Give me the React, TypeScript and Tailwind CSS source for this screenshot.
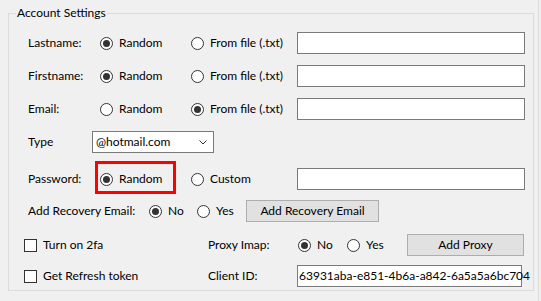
import React from 'react';

const font = { fontFamily: 'Lato, "Noto Sans", sans-serif' };

const Radio: React.FC<{ checked?: boolean; label: string; className?: string }> = ({ checked, label, className = '' }) => (
    <div className={`flex items-center ${className}`}>
        <span className="w-[13px] h-[13px] rounded-full border border-[#333] bg-white flex items-center justify-center shrink-0">
            {checked && <span className="w-[7px] h-[7px] rounded-full bg-[#333]"></span>}
        </span>
        <span className="ml-[6px] whitespace-nowrap">{label}</span>
    </div>
);

const Check: React.FC<{ label: string }> = ({ label }) => (
    <div className="flex items-center w-[199px] pl-[15px]">
        <span className="w-[13px] h-[13px] border border-[#333] bg-white shrink-0"></span>
        <span className="ml-[6px] whitespace-nowrap">{label}</span>
    </div>
);

const TextBox: React.FC<{ value?: string; className?: string }> = ({ value = '', className = 'w-[228px]' }) => (
    <div className={`h-[22px] border border-[#7a7a7a] bg-white flex items-center px-[1px] ${className}`}>
        <span className="whitespace-nowrap">{value}</span>
    </div>
);

const Button: React.FC<{ label: string; className?: string }> = ({ label, className = '' }) => (
    <button className={`h-[22px] border border-[#adadad] bg-[#e1e1e1] flex items-center justify-center ${className}`}>
        {label}
    </button>
);

const SourceRow: React.FC<{ label: string; first: boolean; second: string; mt: string; highlight?: boolean }> = ({ label, first, second, mt, highlight }) => (
    <div className={`flex items-center h-[22px] ${mt}`}>
        <span className="w-[91px] pl-[19px]">{label}</span>
        <div className="w-[91px] relative">
            <Radio checked={first} label="Random" />
            {highlight && (
                <span className="absolute -left-[5px] -top-[10px] w-[81px] h-[33px] border-[3px] border-[#ff0000]"></span>
            )}
        </div>
        <Radio checked={!first} label={second} className="w-[106px]" />
        <TextBox />
    </div>
);

export default function App() {
    return (
        <div className="w-[541px] h-[301px] bg-[#f0f0f0] text-[12px] leading-[16px] text-black overflow-hidden" style={font}>
            <div className="w-[539px] h-[301px] border-r border-[#dcdcdc] pt-[5px]">
                <fieldset className="ml-[8px] w-[526px] border border-[#dcdcdc] pb-[3px]">
                    <legend className="ml-[7px] px-[1px]">Account Settings</legend>
                    <SourceRow label="Lastname:" first={true} second="From file (.txt)" mt="mt-[11px]" />
                    <SourceRow label="Firstname:" first={true} second="From file (.txt)" mt="mt-[11px]" />
                    <SourceRow label="Email:" first={false} second="From file (.txt)" mt="mt-[11px]" />
                    <div className="flex items-center h-[22px] mt-[11px]">
                        <span className="w-[83px] pl-[19px]">Type</span>
                        <div className="w-[122px] h-[22px] border border-[#7a7a7a] bg-white flex items-center justify-between pl-[3px] pr-[6px]">
                            <span>@hotmail.com</span>
                            <svg width="8" height="5" viewBox="0 0 8 5" fill="none">
                                <path d="M0.5 0.5 L4 4 L7.5 0.5" stroke="#333" strokeWidth="1" />
                            </svg>
                        </div>
                    </div>
                    <SourceRow label="Password:" first={true} second="Custom" mt="mt-[15px]" highlight />
                    <div className="flex items-center h-[22px] mt-[10px]">
                        <span className="w-[140px] pl-[19px] whitespace-nowrap">Add Recovery Email:</span>
                        <Radio checked label="No" className="w-[48px]" />
                        <Radio label="Yes" className="w-[49px]" />
                        <Button label="Add Recovery Email" className="w-[133px]" />
                    </div>
                    <div className="flex items-center h-[22px] mt-[12px]">
                        <Check label="Turn on 2fa" />
                        <span className="w-[90px]">Proxy Imap:</span>
                        <Radio checked label="No" className="w-[49px]" />
                        <Radio label="Yes" className="w-[60px]" />
                        <Button label="Add Proxy" className="w-[117px]" />
                    </div>
                    <div className="flex items-center h-[22px] mt-[9px]">
                        <Check label="Get Refresh token" />
                        <span className="w-[89px]">Client ID:</span>
                        <TextBox value="63931aba-e851-4b6a-a842-6a5a5a6bc704" className="w-[225px]" />
                    </div>
                </fieldset>
            </div>
        </div>
    );
}
